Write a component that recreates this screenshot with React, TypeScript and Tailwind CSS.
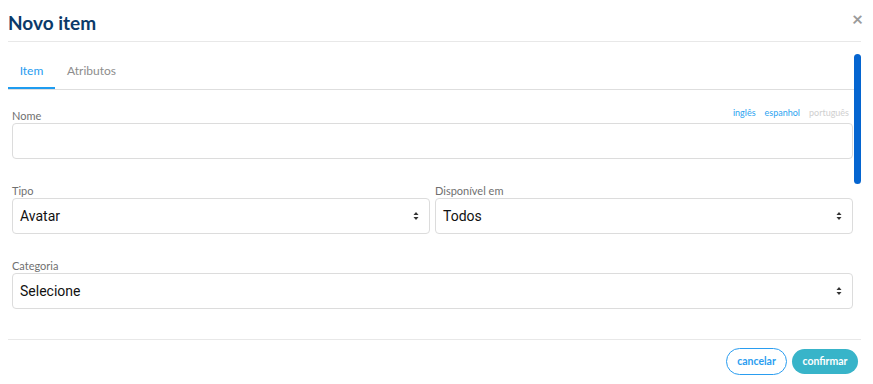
import React from 'react';

function Arrows() {
  return (
    <svg width="6" height="10" viewBox="0 0 6 10" className="shrink-0">
      <path d="M3 1 L5.5 4 H0.5 Z" fill="#333" />
      <path d="M3 9 L5.5 6 H0.5 Z" fill="#333" />
    </svg>
  );
}

function Select({ value }: { value: string }) {
  return (
    <div className="h-[36px] w-full rounded-[4px] border border-[#dcdcdc] bg-white flex items-center justify-between pl-[7px] pr-[10px]">
      <span className="text-[14px] text-[#111] font-['Roboto',sans-serif]">{value}</span>
      <Arrows />
    </div>
  );
}

function Label({ children }: { children: React.ReactNode }) {
  return <span className="text-[11px] leading-[14px] text-[#707070]">{children}</span>;
}

export default function App() {
  return (
    <div className="relative w-[873px] h-[384px] bg-white overflow-hidden font-['Lato',sans-serif]">
      {/* header */}
      <div className="ml-2 mr-3 h-[42px] border-b border-[#e8e8e8] pt-[11px]">
        <h1 className="text-[19px] leading-[24px] font-bold text-[#0b3a6a]">Novo item</h1>
      </div>
      <button className="absolute top-[9px] right-[10px] text-[19px] leading-[19px] font-bold text-[#9a9a9a]">×</button>

      {/* fake scrollbar */}
      <div className="absolute left-[854px] top-[54px] w-[7px] h-[130px] rounded-full bg-[#0565d0]" />

      {/* tabs */}
      <div className="ml-2 mr-3 h-[48px] border-b border-[#dedede] flex items-end">
        <div className="w-[47px] h-[46px] border-b-2 border-[#1f9cf0] flex items-center justify-center pt-[12px]">
          <span className="text-[12px] text-[#1f9cf0]">Item</span>
        </div>
        <div className="ml-[12px] h-[46px] flex items-center pt-[10px]">
          <span className="text-[12px] text-[#8d8d8d]">Atributos</span>
        </div>
      </div>

      {/* form */}
      <div className="pl-3 pr-5 pt-[19px]">
        <div className="flex items-end justify-between h-[14px]">
          <Label>Nome</Label>
          <div className="flex gap-[9px] text-[9px] leading-[14px] mr-[4px] pb-[3px]">
            <span className="text-[#2ca3f0]">inglês</span>
            <span className="text-[#2ca3f0]">espanhol</span>
            <span className="text-[#cfcfcf]">português</span>
          </div>
        </div>
        <div className="h-[36px] rounded-[4px] border border-[#dcdcdc]" />

        <div className="mt-[25px] grid grid-cols-2 gap-x-[5px]">
          <div>
            <div className="h-[14px] flex items-end"><Label>Tipo</Label></div>
            <Select value="Avatar" />
          </div>
          <div>
            <div className="h-[14px] flex items-end"><Label>Disponível em</Label></div>
            <Select value="Todos" />
          </div>
        </div>

        <div className="mt-[25px]">
          <div className="h-[14px] flex items-end"><Label>Categoria</Label></div>
          <Select value="Selecione" />
        </div>
      </div>

      {/* footer */}
      <div className="ml-2 mr-3 mt-[30px] border-t border-[#e8e8e8] pt-[8px] flex justify-end gap-[5px] pr-[3px]">
        <button className="w-[61px] h-[27px] rounded-full border border-[#2a9df0] text-[10.5px] font-bold text-[#2a9df0] bg-white">cancelar</button>
        <button className="w-[66px] h-[25px] mt-[1px] rounded-full bg-[#38b4c9] text-[10.5px] font-bold text-white">confirmar</button>
      </div>
    </div>
  );
}
